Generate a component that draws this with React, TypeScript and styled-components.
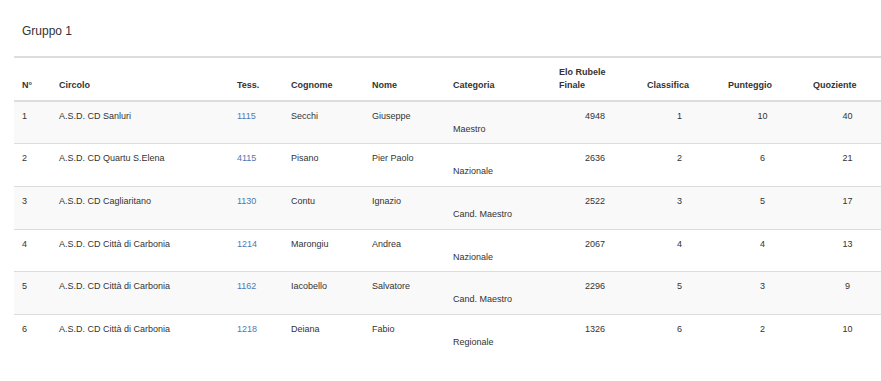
import React from "react";
import styled, { createGlobalStyle } from "styled-components";

const Global = createGlobalStyle`
  html, body { margin: 0; padding: 0; background: #fff; overflow: hidden; }
  body { font-family: "Liberation Sans", Arial, sans-serif; color: #333; }
`;

const Page = styled.div`
  padding-left: 14px;
  width: 876px;
`;

const Title = styled.h3`
  margin: 23px 0 16px 0;
  padding-left: 8px;
  font-size: 12px;
  line-height: 17px;
  font-weight: normal;
  color: #333;
`;

const Table = styled.table`
  width: 876px;
  border-collapse: collapse;
  border-top: 2px solid #ddd;
  font-size: 9px;
  line-height: 1.42857;
  table-layout: fixed;
`;

const Th = styled.th<{ $w: number }>`
  box-sizing: border-box;
  width: ${(p) => p.$w}px;
  padding: 8px;
  text-align: left;
  vertical-align: bottom;
  font-weight: bold;
  color: #333;
  border-bottom: 2px solid #ddd;
`;

const Row = styled.tr<{ $striped: boolean }>`
  background: ${(p) => (p.$striped ? "#f9f9f9" : "#fff")};
  border-bottom: 1px solid #ddd;
  &:last-child { border-bottom: none; }
`;

const Td = styled.td<{ $align?: string; $pr?: number; $pl?: number }>`
  padding: 8px ${(p) => p.$pr ?? 8}px 8px ${(p) => p.$pl ?? 8}px;
  vertical-align: top;
  text-align: ${(p) => p.$align ?? "left"};
  color: #333;
  white-space: nowrap;
`;

const Link = styled.span`
  color: #4f78b3;
`;

const cols = [
  { label: "N°", w: 37 },
  { label: "Circolo", w: 178 },
  { label: "Tess.", w: 54 },
  { label: "Cognome", w: 81 },
  { label: "Nome", w: 81 },
  { label: "Categoria", w: 106 },
  { label: "Elo Rubele Finale", w: 88 },
  { label: "Classifica", w: 81 },
  { label: "Punteggio", w: 85 },
  { label: "Quoziente", w: 85 },
];

const rows = [
  ["1", "A.S.D. CD Sanluri", "1115", "Secchi", "Giuseppe", "Maestro", "4948", "1", "10", "40"],
  ["2", "A.S.D. CD Quartu S.Elena", "4115", "Pisano", "Pier Paolo", "Nazionale", "2636", "2", "6", "21"],
  ["3", "A.S.D. CD Cagliaritano", "1130", "Contu", "Ignazio", "Cand. Maestro", "2522", "3", "5", "17"],
  ["4", "A.S.D. CD Città di Carbonia", "1214", "Marongiu", "Andrea", "Nazionale", "2067", "4", "4", "13"],
  ["5", "A.S.D. CD Città di Carbonia", "1162", "Iacobello", "Salvatore", "Cand. Maestro", "2296", "5", "3", "9"],
  ["6", "A.S.D. CD Città di Carbonia", "1218", "Deiana", "Fabio", "Regionale", "1326", "6", "2", "10"],
];

export default function App() {
  return (
    <Page>
      <Global />
      <Title>Gruppo 1</Title>
      <Table>
        <thead>
          <tr>
            {cols.map((c) => (
              <Th key={c.label} $w={c.w}>
                {c.label === "Elo Rubele Finale" ? (
                  <>
                    Elo Rubele
                    <br />
                    Finale
                  </>
                ) : (
                  c.label
                )}
              </Th>
            ))}
          </tr>
        </thead>
        <tbody>
          {rows.map((r, i) => (
            <Row key={i} $striped={i % 2 === 0}>
              <Td>{r[0]}</Td>
              <Td>{r[1]}</Td>
              <Td>
                <Link>{r[2]}</Link>
              </Td>
              <Td>{r[3]}</Td>
              <Td>{r[4]}</Td>
              <Td>
                <br />
                {r[5]}
              </Td>
              <Td $align="right" $pr={34}>{r[6]}</Td>
              <Td $align="center">{r[7]}</Td>
              <Td $align="center">{r[8]}</Td>
              <Td $align="center">{r[9]}</Td>
            </Row>
          ))}
        </tbody>
      </Table>
    </Page>
  );
}
